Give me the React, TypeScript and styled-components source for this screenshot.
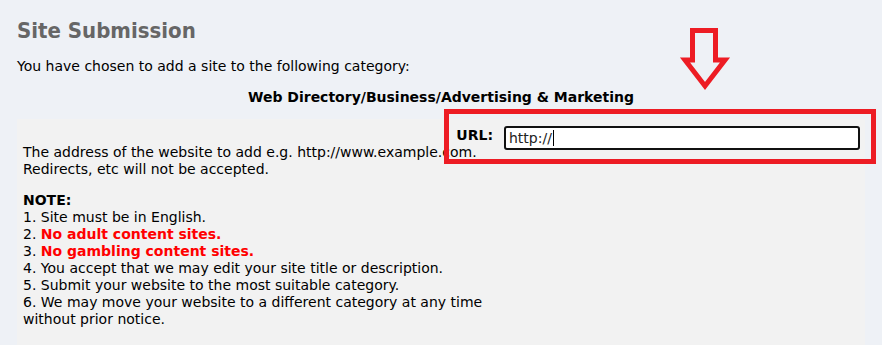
import React from "react";
import styled, { createGlobalStyle } from "styled-components";

const red = "#ff0000";
const marker = "#ed1c24";

const GlobalStyle = createGlobalStyle`
    html, body {
        margin: 0;
        padding: 0;
        background: #eef1f6;
    }

    body {
        font-family: "DejaVu Sans", Verdana, sans-serif;
        font-size: 14px;
        line-height: 17px;
        color: #000;
    }
`

const Page = styled.div`
    position: relative;
    box-sizing: border-box;
    width: 882px;
    min-height: 345px;
    padding: 18px 17px 0;
    overflow: hidden;
`

const Heading = styled.h1`
    margin: 0;
    font-family: "DejaVu Sans Condensed", "DejaVu Sans", sans-serif;
    font-size: 22px;
    line-height: 26px;
    font-weight: bold;
    color: #666;
`

const Intro = styled.p`
    margin: 14px 0 0;
`

const Category = styled.p`
    margin: 14px 0 0;
    font-weight: bold;
    text-align: center;
`

const Panel = styled.div`
    display: grid;
    margin-top: 13px;
    padding: 7px 5px 20px 6px;
    background: #f2f2f2;
`

const UrlRow = styled.div`
    grid-area: 1 / 1;
    justify-self: end;
    align-self: start;
    display: flex;
    align-items: flex-start;
    gap: 11px;
`

const Label = styled.label`
    margin-top: 1px;
    font-weight: bold;
`

const Field = styled.div`
    box-sizing: border-box;
    width: 356px;
    height: 24px;
    padding: 0 3px;
    border: 2px solid #111;
    border-radius: 3px;
    background: #fff;
    line-height: 20px;
    color: #222;
`

const Caret = styled.span`
    display: inline-block;
    width: 1px;
    height: 16px;
    margin-left: 1px;
    vertical-align: -3px;
    background: #000;
`

const Info = styled.div`
    grid-area: 1 / 1;
    width: 466px;
    padding-top: 18px;
`

const Block = styled.div<{ $gap?: number }>`
    margin-top: ${p => p.$gap ?? 0}px;
`

const Line = styled.div``

const Warn = styled.b`
    color: ${red};
`

const Highlight = styled.div`
    position: absolute;
    left: 444px;
    top: 109px;
    width: 432px;
    height: 55px;
    box-sizing: border-box;
    border: 5px solid ${marker};
    pointer-events: none;
`

const Arrow = styled.svg`
    position: absolute;
    left: 677px;
    top: 26px;
`

const notes: { text: string, warn?: boolean }[] = [
    { text: "Site must be in English." },
    { text: "No adult content sites.", warn: true },
    { text: "No gambling content sites.", warn: true },
    { text: "You accept that we may edit your site title or description." },
    { text: "Submit your website to the most suitable category." },
    { text: "We may move your website to a different category at any time without prior notice." },
];

const App = () => {
    return <>
        <GlobalStyle />
        <Page>
            <Heading>Site Submission</Heading>
            <Intro>You have chosen to add a site to the following category:</Intro>
            <Category>Web Directory/Business/Advertising &amp; Marketing</Category>

            <Panel>
                <UrlRow>
                    <Label>URL:</Label>
                    <Field>http://<Caret /></Field>
                </UrlRow>

                <Info>
                    <Block>
                        The address of the website to add e.g. http://www.example.com. Redirects, etc will not be accepted.
                    </Block>
                    <Block $gap={14}>
                        <b>NOTE:</b>
                        {notes.map((note, index) => <Line key={index}>
                            {index + 1}. {note.warn ? <Warn>{note.text}</Warn> : note.text}
                        </Line>)}
                    </Block>
                </Info>
            </Panel>

            <Highlight />
            <Arrow width="56" height="68" viewBox="0 0 56 68">
                <polygon
                    points="15.5,4.5 38.5,4.5 38.5,34 48,34 28,60 8,34 15.5,34"
                    fill="none"
                    stroke={marker}
                    strokeWidth="5"
                />
            </Arrow>
        </Page>
    </>
}

export default App;
